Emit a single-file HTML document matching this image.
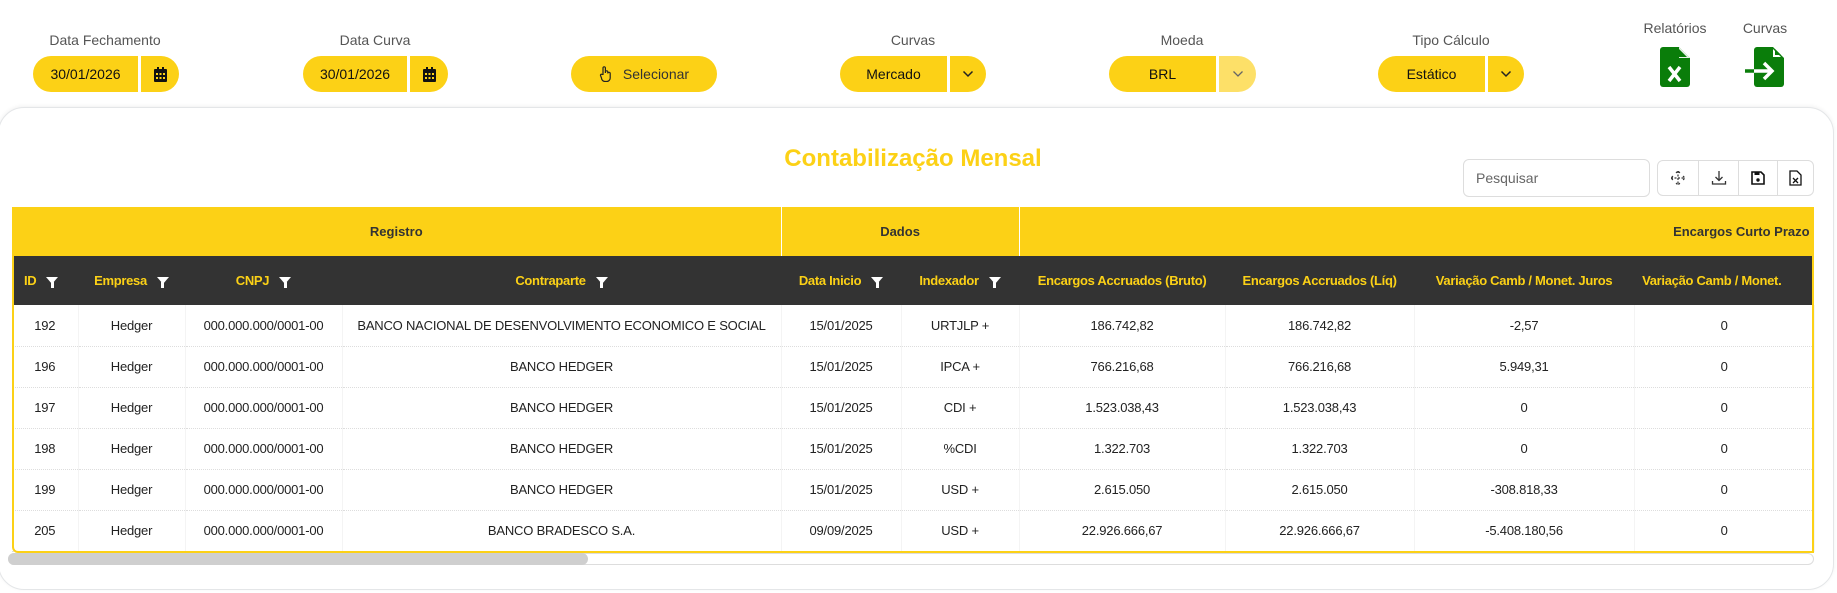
<!DOCTYPE html>
<html><head><meta charset="utf-8"><style>
*{box-sizing:border-box;margin:0;padding:0}
body{width:1837px;height:593px;background:#fff;font-family:"Liberation Sans",sans-serif;position:relative;overflow:hidden;color:#222}
.lbl{position:absolute;top:32px;font-size:14px;color:#555;text-align:center;transform:translateX(-50%);white-space:nowrap}
.pill{position:absolute;top:56px;height:36px;background:#fcd116;font-size:14px;color:#111;display:flex;align-items:center;justify-content:center}
.l{border-radius:18px 0 0 18px}.r{border-radius:0 18px 18px 0}
.card{position:absolute;left:-2px;top:107px;width:1836px;height:483px;border:1px solid #e4e6e8;border-radius:26px;box-shadow:0 -1px 4px rgba(0,0,0,.06);background:#fff}
.title{position:absolute;top:145px;left:913px;transform:translateX(-50%);font-size:24px;font-weight:bold;color:#fcd116;white-space:nowrap}
table{position:absolute;left:12px;top:207px;border-collapse:collapse;table-layout:fixed;width:1802px}
td,th{overflow:hidden;white-space:nowrap;text-align:center}
.g th{background:#fcd116;height:49px;font-size:13px;color:#333;border-right:1px solid #fff}
.h th{background:#333;height:49px;font-size:13px;color:#fcd116;letter-spacing:-0.3px}
.f{display:inline-block;width:0;height:0;border-left:6px solid transparent;border-right:6px solid transparent;border-top:7px solid #fff;margin-left:10px;position:relative;top:-1px}
.f:after{content:"";position:absolute;left:-1.5px;top:-2px;width:3px;height:6px;background:#fff}
tbody td{height:41px;font-size:13px;letter-spacing:-0.2px;color:#222;border-bottom:1px dotted #ddd;border-right:1px solid #f4f4f4}
.wrap{position:absolute;left:12px;top:207px;width:1802px;height:346px;border:2px solid #fcd116;border-top:none;border-radius:6px 0 0 6px;pointer-events:none}
</style></head><body>
<div class="lbl" style="left:105px">Data Fechamento</div>
<div class="pill l" style="left:33px;width:105px">30/01/2026</div>
<div class="pill r" style="left:141px;width:38px"><svg width="13" height="15" viewBox="0 0 13 15"><rect x="0" y="2" width="13" height="13" rx="1" fill="#111"/><rect x="3" y="0" width="2" height="3" fill="#111"/><rect x="8" y="0" width="2" height="3" fill="#111"/><g fill="#fcd116"><rect x="2" y="6" width="2" height="2"/><rect x="5.5" y="6" width="2" height="2"/><rect x="9" y="6" width="2" height="2"/><rect x="2" y="10" width="2" height="2"/><rect x="5.5" y="10" width="2" height="2"/><rect x="9" y="10" width="2" height="2"/></g></svg></div>
<div class="lbl" style="left:375px">Data Curva</div>
<div class="pill l" style="left:303px;width:104px">30/01/2026</div>
<div class="pill r" style="left:410px;width:38px"><svg width="13" height="15" viewBox="0 0 13 15"><rect x="0" y="2" width="13" height="13" rx="1" fill="#111"/><rect x="3" y="0" width="2" height="3" fill="#111"/><rect x="8" y="0" width="2" height="3" fill="#111"/><g fill="#fcd116"><rect x="2" y="6" width="2" height="2"/><rect x="5.5" y="6" width="2" height="2"/><rect x="9" y="6" width="2" height="2"/><rect x="2" y="10" width="2" height="2"/><rect x="5.5" y="10" width="2" height="2"/><rect x="9" y="10" width="2" height="2"/></g></svg></div>
<div class="pill" style="left:571px;width:146px;border-radius:18px;color:#333"><svg width="14" height="16" viewBox="0 0 14 16" style="margin-right:10px"><path d="M4 9V2a1.2 1.2 0 0 1 2.4 0v5M6.4 7V6a1.2 1.2 0 0 1 2.4 0v1M8.8 7.5a1.2 1.2 0 0 1 2.4 0V12a3.5 3.5 0 0 1-3.5 3.5H6A3.5 3.5 0 0 1 2.5 12L1.5 9.5a1 1 0 0 1 2-.5" fill="none" stroke="#222" stroke-width="1.2"/></svg>Selecionar</div>
<div class="lbl" style="left:913px">Curvas</div>
<div class="pill l" style="left:840px;width:107px">Mercado</div>
<div class="pill r" style="left:950px;width:36px"><svg width="12" height="8"><path d="M1.5 1.5l4.5 4.5 4.5-4.5" fill="none" stroke="#222" stroke-width="1.5"/></svg></div>
<div class="lbl" style="left:1182px">Moeda</div>
<div class="pill l" style="left:1109px;width:107px">BRL</div>
<div class="pill r" style="left:1219px;width:37px;background:#fde068"><svg width="12" height="8"><path d="M1.5 1.5l4.5 4.5 4.5-4.5" fill="none" stroke="#666" stroke-width="1.3"/></svg></div>
<div class="lbl" style="left:1451px">Tipo Cálculo</div>
<div class="pill l" style="left:1378px;width:107px">Estático</div>
<div class="pill r" style="left:1488px;width:36px"><svg width="12" height="8"><path d="M1.5 1.5l4.5 4.5 4.5-4.5" fill="none" stroke="#222" stroke-width="1.5"/></svg></div>
<div class="lbl" style="left:1675px;top:20px">Relatórios</div>
<svg style="position:absolute;left:1660px;top:47px" width="30" height="40" viewBox="0 0 30 40"><path d="M3 0H19L30 11V37a3 3 0 0 1-3 3H3a3 3 0 0 1-3-3V3a3 3 0 0 1 3-3z" fill="#0a7d0a"/><path d="M19 0v11h11" fill="#fff" opacity=".9"/><path d="M19 2v8h8" fill="#0a7d0a"/><path d="M9 20l11 14M20 20L9 34" stroke="#fff" stroke-width="3.5"/></svg>
<div class="lbl" style="left:1765px;top:20px">Curvas</div>
<svg style="position:absolute;left:1744px;top:47px" width="42" height="40" viewBox="0 0 42 40"><path d="M13 0H29L40 11V37a3 3 0 0 1-3 3H13a3 3 0 0 1-3-3V3a3 3 0 0 1 3-3z" fill="#0a7d0a"/><path d="M29 2v8h8" fill="#fff"/><path d="M31 2v6h6" fill="#0a7d0a"/><path d="M1 24h27M20 16l8 8-8 8" fill="none" stroke="#fff" stroke-width="3.5"/><path d="M1 24h9" stroke="#0a7d0a" stroke-width="3.5"/></svg>
<div class="card"></div>
<div class="title">Contabilização Mensal</div>
<div style="position:absolute;left:1463px;top:159px;width:187px;height:38px;border:1px solid #ddd;border-radius:6px;font-size:14px;color:#666;padding:10px 12px">Pesquisar</div>
<div style="position:absolute;left:1657px;top:160px;width:157px;height:36px;border:1px solid #ddd;border-radius:6px;display:flex">
<div style="width:41px;border-right:1px solid #ddd;display:flex;align-items:center;justify-content:center"><svg width="16" height="16" viewBox="0 0 16 16" fill="none" stroke="#333" stroke-width="1.2"><path d="M8 1v14M1 8h14M6 3l2-2 2 2M6 13l2 2 2-2M3 6L1 8l2 2M13 6l2 2-2 2" stroke-dasharray="2 1.5"/></svg></div>
<div style="width:40px;border-right:1px solid #ddd;display:flex;align-items:center;justify-content:center"><svg width="16" height="16" viewBox="0 0 16 16" fill="none" stroke="#333" stroke-width="1.3"><path d="M8 1v9M4.5 7L8 10.5 11.5 7M1.5 11v3h13v-3"/></svg></div>
<div style="width:39px;border-right:1px solid #ddd;display:flex;align-items:center;justify-content:center"><svg width="14" height="14" viewBox="0 0 14 14"><path d="M1 1h9l3 3v9H1z" fill="none" stroke="#111" stroke-width="1.6"/><rect x="3.5" y="1" width="5" height="3" fill="#111"/><circle cx="7" cy="9" r="1.7" fill="#111"/></svg></div>
<div style="flex:1;display:flex;align-items:center;justify-content:center"><svg width="13" height="16" viewBox="0 0 13 16"><path d="M1 1h7l4 4v10H1z" fill="none" stroke="#111" stroke-width="1.3"/><path d="M4 8l5 5M9 8l-5 5" stroke="#111" stroke-width="1.3"/></svg></div>
</div>
<table>
<colgroup><col style="width:66px"><col style="width:107px"><col style="width:157px"><col style="width:439px"><col style="width:120px"><col style="width:118px"><col style="width:206px"><col style="width:189px"><col style="width:220px"><col style="width:180px"></colgroup>
<tr class="g"><th colspan="4">Registro</th><th colspan="2">Dados</th><th colspan="4" style="text-align:right;padding-right:4px">Encargos Curto Prazo</th></tr>
<tr class="h"><th style="text-align:left;padding-left:12px">ID<i class="f"></i></th><th>Empresa<i class="f"></i></th><th>CNPJ<i class="f"></i></th><th>Contraparte<i class="f"></i></th><th>Data Inicio<i class="f"></i></th><th>Indexador<i class="f"></i></th><th>Encargos Accruados (Bruto)</th><th>Encargos Accruados (Líq)</th><th>Variação Camb / Monet. Juros</th><th style="text-align:left;padding-left:8px">Variação Camb / Monet.</th></tr>
<tbody>
<tr><td>192</td><td>Hedger</td><td>000.000.000/0001-00</td><td>BANCO NACIONAL DE DESENVOLVIMENTO ECONOMICO E SOCIAL</td><td>15/01/2025</td><td>URTJLP +</td><td>186.742,82</td><td>186.742,82</td><td>-2,57</td><td>0</td></tr>
<tr><td>196</td><td>Hedger</td><td>000.000.000/0001-00</td><td>BANCO HEDGER</td><td>15/01/2025</td><td>IPCA +</td><td>766.216,68</td><td>766.216,68</td><td>5.949,31</td><td>0</td></tr>
<tr><td>197</td><td>Hedger</td><td>000.000.000/0001-00</td><td>BANCO HEDGER</td><td>15/01/2025</td><td>CDI +</td><td>1.523.038,43</td><td>1.523.038,43</td><td>0</td><td>0</td></tr>
<tr><td>198</td><td>Hedger</td><td>000.000.000/0001-00</td><td>BANCO HEDGER</td><td>15/01/2025</td><td>%CDI</td><td>1.322.703</td><td>1.322.703</td><td>0</td><td>0</td></tr>
<tr><td>199</td><td>Hedger</td><td>000.000.000/0001-00</td><td>BANCO HEDGER</td><td>15/01/2025</td><td>USD +</td><td>2.615.050</td><td>2.615.050</td><td>-308.818,33</td><td>0</td></tr>
<tr><td>205</td><td>Hedger</td><td>000.000.000/0001-00</td><td>BANCO BRADESCO S.A.</td><td>09/09/2025</td><td>USD +</td><td>22.926.666,67</td><td>22.926.666,67</td><td>-5.408.180,56</td><td>0</td></tr>
</tbody></table>
<div class="wrap"></div>
<div style="position:absolute;left:8px;top:553px;width:1806px;height:12px;border:1px solid #ddd;border-radius:6px"></div>
<div style="position:absolute;left:8px;top:553px;width:580px;height:12px;background:#cfcfcf;border-radius:6px"></div>
</body></html>
